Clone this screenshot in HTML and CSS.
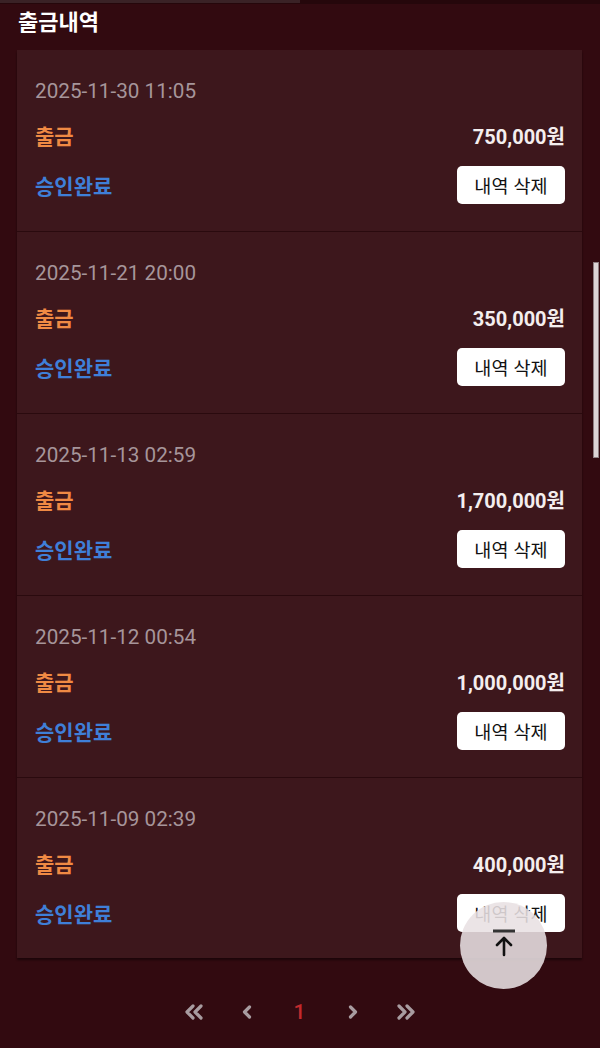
FILE: index.html
```html
<!DOCTYPE html>
<html lang="ko">
<head>
<meta charset="utf-8">
<link rel="stylesheet" href="styles.css">
</head>
<body>
<div class="topbar"><div class="topbar-tab"></div></div>
<main class="page">
  <h1 class="title">출금내역</h1>
  <section class="list">
    <div class="item">
      <div class="date">2025-11-30 11:05</div>
      <div class="row"><span class="type">출금</span><span class="amount">750,000원</span></div>
      <div class="row"><span class="status">승인완료</span><button class="del">내역 삭제</button></div>
    </div>
    <div class="item">
      <div class="date">2025-11-21 20:00</div>
      <div class="row"><span class="type">출금</span><span class="amount">350,000원</span></div>
      <div class="row"><span class="status">승인완료</span><button class="del">내역 삭제</button></div>
    </div>
    <div class="item">
      <div class="date">2025-11-13 02:59</div>
      <div class="row"><span class="type">출금</span><span class="amount">1,700,000원</span></div>
      <div class="row"><span class="status">승인완료</span><button class="del">내역 삭제</button></div>
    </div>
    <div class="item">
      <div class="date">2025-11-12 00:54</div>
      <div class="row"><span class="type">출금</span><span class="amount">1,000,000원</span></div>
      <div class="row"><span class="status">승인완료</span><button class="del">내역 삭제</button></div>
    </div>
    <div class="item last">
      <div class="date">2025-11-09 02:39</div>
      <div class="row"><span class="type">출금</span><span class="amount">400,000원</span></div>
      <div class="row"><span class="status">승인완료</span><button class="del">내역 삭제</button></div>
    </div>
  </section>
  <nav class="pager">
    <span class="pg">
      <svg width="22" height="16" viewBox="0 0 22 16"><path d="M10 2 L4 8 L10 14 M18 2 L12 8 L18 14" fill="none" stroke="currentColor" stroke-width="3.2" stroke-linecap="round" stroke-linejoin="round"/></svg>
    </span>
    <span class="pg">
      <svg width="12" height="16" viewBox="0 0 12 16"><path d="M8.5 3 L3.5 8 L8.5 13" fill="none" stroke="currentColor" stroke-width="3.2" stroke-linecap="round" stroke-linejoin="round"/></svg>
    </span>
    <span class="pg cur">1</span>
    <span class="pg">
      <svg width="12" height="16" viewBox="0 0 12 16"><path d="M3.5 3 L8.5 8 L3.5 13" fill="none" stroke="currentColor" stroke-width="3.2" stroke-linecap="round" stroke-linejoin="round"/></svg>
    </span>
    <span class="pg">
      <svg width="22" height="16" viewBox="0 0 22 16"><path d="M4 2 L10 8 L4 14 M12 2 L18 8 L12 14" fill="none" stroke="currentColor" stroke-width="3.2" stroke-linecap="round" stroke-linejoin="round"/></svg>
    </span>
  </nav>
</main>
<div class="scrollbar"></div>
<button class="totop" aria-label="맨 위로">
  <svg width="24" height="28" viewBox="0 0 24 28"><path d="M1 2 H23" stroke="#333" stroke-width="3"/><path d="M12 26 V10 M5 16 L12 9 L19 16" fill="none" stroke="#111" stroke-width="2.6" stroke-linecap="round" stroke-linejoin="round"/></svg>
</button>
</body>
</html>
```
FILE: styles.css
```css
* { box-sizing: border-box; }
html, body { margin: 0; padding: 0; }
body {
  width: 600px;
  height: 1048px;
  overflow: hidden;
  background: #320a10;
  font-family: Roboto, "Noto Sans CJK KR", sans-serif;
  position: relative;
}
.topbar {
  height: 4px;
  background: #25070b;
}
.topbar-tab {
  width: 300px;
  height: 3px;
  background: #3a2226;
}
.page {
  padding: 0 18px 0 17px;
}
.title {
  margin: 0;
  padding: 2px 0 0 1px;
  height: 46px;
  font-family: "Noto Sans CJK KR", sans-serif;
  font-size: 22px;
  font-weight: 700;
  line-height: 28px;
  color: #ffffff;
}
.list {
  background: #3d171c;
  box-shadow: 0 2px 2px rgba(0,0,0,0.45);
}
.item {
  height: 182px;
  padding: 26px 17px 0 18px;
  border-bottom: 1px solid #2a0a0e;
  display: flex;
  flex-direction: column;
}
.item.last { border-bottom: none; height: 180px; }
.date {
  height: 30px;
  line-height: 30px;
  font-size: 20.7px;
  color: #a6959a;
  margin-bottom: 14px;
}
.row {
  display: flex;
  justify-content: space-between;
  align-items: center;
}
.row + .row { margin-top: 16px; }
.type {
  height: 30px;
  line-height: 30px;
  font-family: "Noto Sans CJK KR", sans-serif;
  font-size: 21px;
  font-weight: 700;
  color: #f08a44;
}
.amount {
  font-family: Roboto, "Noto Sans CJK KR", sans-serif;
  font-size: 20px;
  font-weight: 700;
  color: #f4eeee;
}
.status {
  font-family: "Noto Sans CJK KR", sans-serif;
  font-size: 21px;
  font-weight: 700;
  color: #3f7fd8;
}
.del {
  width: 108px;
  height: 38px;
  border: none;
  border-radius: 5px;
  background: #ffffff;
  color: #111;
  font-family: "Noto Sans CJK KR", sans-serif;
  font-size: 18.5px;
  font-weight: 400;
  padding: 0;
}
.pager {
  display: flex;
  justify-content: center;
  align-items: center;
  gap: 0;
  margin-top: 42px;
  height: 24px;
}
.pg {
  width: 53px;
  display: flex;
  justify-content: center;
  align-items: center;
  color: #a89ca0;
}
.pg.cur {
  color: #c32a2d;
  font-size: 21px;
  font-weight: 500;
}
.scrollbar {
  position: absolute;
  left: 593px;
  top: 262px;
  width: 6px;
  height: 196px;
  background: #dcd4d6;
  border: 1px solid #8e7f83;
}
.totop {
  position: absolute;
  left: 460px;
  top: 902px;
  width: 87px;
  height: 87px;
  border-radius: 50%;
  border: none;
  background: rgba(232, 224, 226, 0.88);
  display: flex;
  justify-content: center;
  align-items: flex-start;
  padding: 27px 0 0 0;
}
```
